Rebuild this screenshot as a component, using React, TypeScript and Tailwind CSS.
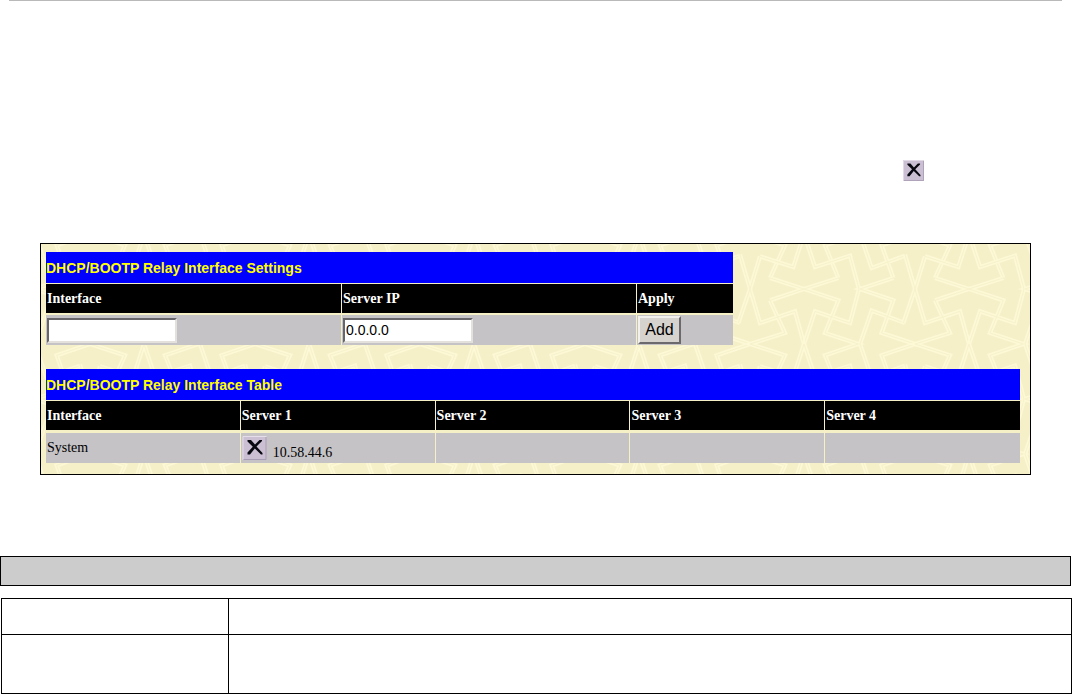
import React from "react";

const STRANDS = [
  "M120 105L222 138L325 172L285 270L385 303L285 337L325 435",
  "M120 172L222 138L325 105",
  "M120 172L165 270L60 303L165 337L120 435",
  "M90 40L60 138L25 240",
  "M30 35L60 138L90 240L195 205L222 303L255 205L360 240L387 138L360 38L255 72L222 -27L190 72L90 40",
  "M490 105L390 138L490 172L455 270L555 303L455 337L490 435",
  "M390 303L425 203L525 240",
  "M390 303L425 405L525 368",
];

const OFFSETS = [-495, 0, 495].flatMap((x) => [-330, 0, 330].map((y) => ({ x, y })));

function Wallpaper() {
  const line = STRANDS.join("");
  return (
    <svg aria-hidden="true" className="absolute inset-0 h-full w-full">
      <defs>
        <pattern
          id="lattice"
          width="495"
          height="330"
          patternUnits="userSpaceOnUse"
          patternTransform="translate(689 -1) scale(0.33333)"
        >
          <rect width="495" height="330" fill="#f6f0c8" />
          {OFFSETS.map(({ x, y }) => (
            <g key={`${x},${y}`} transform={`translate(${x} ${y})`} fill="none">
              <path d={line} stroke="#fdf9d6" strokeWidth="13" />
              <path d={line} stroke="#f7f2cb" strokeWidth="3" />
            </g>
          ))}
        </pattern>
      </defs>
      <rect width="100%" height="100%" fill="url(#lattice)" />
    </svg>
  );
}

function DeleteIcon() {
  return (
    <svg viewBox="0 0 24 24" className="block h-full w-full" aria-hidden="true">
      <rect width="24" height="24" fill="#cbbfd3" />
      <path d="M0.5 24V0.5H24" fill="none" stroke="#e6dfea" />
      <path d="M23.5 1V23.5H1" fill="none" stroke="#a99db3" />
      <path
        d="M5 4H8.500L12.500 8.500L17 4H19.500V5L14 10.500L20 17V18.500H18.500L12.300 12.500L7.500 18.500H5V16.500L10.300 10.700L5 5.500Z"
        fill="#080810"
      />
    </svg>
  );
}

const title =
  "h-8 border-b border-[#f5f0c6] bg-[#0000ff] bg-clip-padding px-0 text-left font-['Liberation_Sans',sans-serif] text-sm font-bold text-[#ffff00]";
const head =
  "border-r border-[#f5f0c6] bg-black bg-clip-padding px-px text-left font-bold text-white last:border-r-0";
const cell = "h-[30px] border-r border-[#f5f0c6] bg-[#c6c3c6] bg-clip-padding px-px py-0 last:border-r-0";
const input =
  "block h-[25px] w-[130px] rounded-none border-2 border-t-[#69666a] border-l-[#69666a] border-r-[#e4e1dc] border-b-[#e4e1dc] bg-white px-px font-['Liberation_Sans',sans-serif] text-sm text-black outline-none";

export default function App() {
  return (
    <main className="bg-white font-['Liberation_Serif',serif] text-sm text-black">
      <hr className="mr-[10px] ml-[9px] border-t border-[#b9b9b9]" />
      <div className="flex justify-end pt-[159px] pr-[148px]">
        <button type="button" aria-label="Delete" className="h-[21px] w-[21px]">
          <DeleteIcon />
        </button>
      </div>

      <section className="relative mt-[62px] mr-[41px] ml-10 border border-black">
        <Wallpaper />
        <div className="relative pt-2 pr-[10px] pb-[11px] pl-[5px]">
          <form onSubmit={(e) => e.preventDefault()}>
            <table className="w-[687px] max-w-full table-fixed border-separate border-spacing-0">
              <colgroup>
                <col className="w-[296px]" />
                <col />
                <col className="w-24" />
              </colgroup>
              <thead>
                <tr>
                  <th colSpan={3} className={title}>DHCP/BOOTP Relay Interface Settings</th>
                </tr>
                <tr>
                  <th className={`${head} h-[31px] border-b-2`}><label htmlFor="interface">Interface</label></th>
                  <th className={`${head} h-[31px] border-b-2`}><label htmlFor="server">Server IP</label></th>
                  <th className={`${head} h-[31px] border-b-2`}>Apply</th>
                </tr>
              </thead>
              <tbody>
                <tr>
                  <td className={cell}><input id="interface" type="text" className={input} /></td>
                  <td className={cell}><input id="server" type="text" defaultValue="0.0.0.0" className={input} /></td>
                  <td className={cell}>
                    <button
                      type="submit"
                      className="block h-7 w-[43px] border-2 border-t-[#f2f0ed] border-l-[#f2f0ed] border-r-[#6b696b] border-b-[#6b696b] bg-[#d6d3ce] font-['Liberation_Sans',sans-serif] text-base leading-6"
                    >
                      Add
                    </button>
                  </td>
                </tr>
              </tbody>
            </table>
          </form>

          <table className="mt-6 w-full table-fixed border-separate border-spacing-0">
            <thead>
              <tr>
                <th colSpan={5} className={title}>DHCP/BOOTP Relay Interface Table</th>
              </tr>
              <tr>
                {["Interface", "Server 1", "Server 2", "Server 3", "Server 4"].map((name) => (
                  <th key={name} className={`${head} h-8 border-b-3`}>{name}</th>
                ))}
              </tr>
            </thead>
            <tbody>
              <tr>
                <td className={cell}>System</td>
                <td className={cell}>
                  <div className="flex items-start gap-[6px]">
                    <button type="button" aria-label="Delete 10.58.44.6" className="h-6 w-[25px]">
                      <DeleteIcon />
                    </button>
                    <span className="pt-[9px] leading-4">10.58.44.6</span>
                  </div>
                </td>
                <td className={cell} />
                <td className={cell} />
                <td className={cell} />
              </tr>
            </tbody>
          </table>
        </div>
      </section>

      <div className="mt-[81px] mr-px h-[30px] border border-black bg-[#cccccc]" />

      <div className="mt-3 pl-px">
        <table className="w-full table-fixed border-separate border-spacing-0 border-t border-l border-black">
          <colgroup>
            <col className="w-[227px]" />
            <col />
          </colgroup>
          <tbody>
            <tr>
              <td className="h-9 border-r border-b border-black" />
              <td className="h-9 border-r border-b border-black" />
            </tr>
            <tr>
              <td className="h-[59px] border-r border-b border-black" />
              <td className="h-[59px] border-r border-b border-black" />
            </tr>
          </tbody>
        </table>
      </div>
    </main>
  );
}
